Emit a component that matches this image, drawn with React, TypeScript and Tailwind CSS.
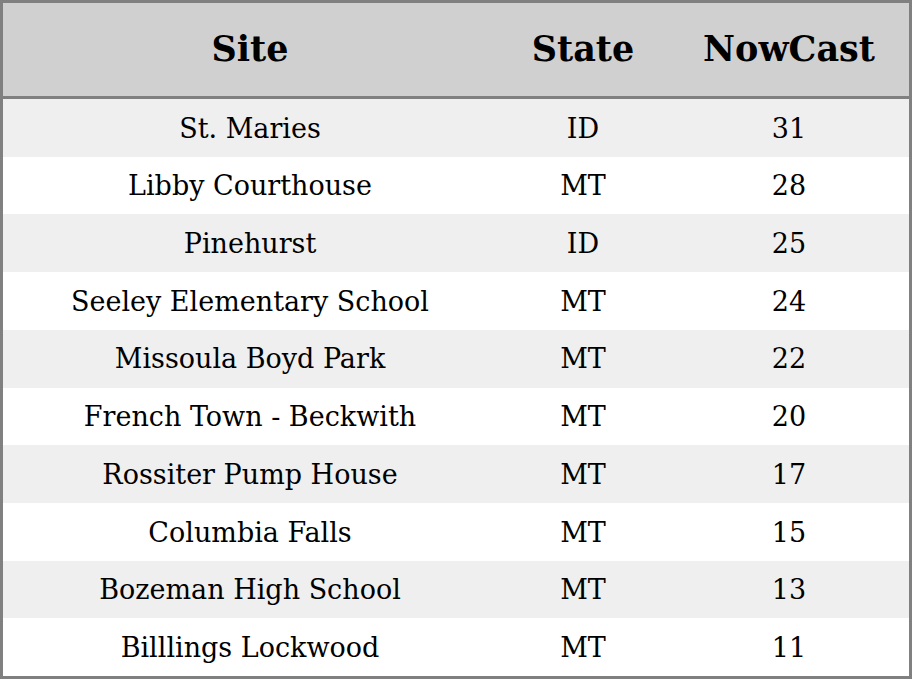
const rows: [string, string, number][] = [
  ["St. Maries", "ID", 31],
  ["Libby Courthouse", "MT", 28],
  ["Pinehurst", "ID", 25],
  ["Seeley Elementary School", "MT", 24],
  ["Missoula Boyd Park", "MT", 22],
  ["French Town - Beckwith", "MT", 20],
  ["Rossiter Pump House", "MT", 17],
  ["Columbia Falls", "MT", 15],
  ["Bozeman High School", "MT", 13],
  ["Billlings Lockwood", "MT", 11],
]

export default function App() {
  return (
    <div className="w-[912px] h-[679px] bg-white font-['DejaVu_Serif',serif] text-black">
      <div className="border-[3px] border-[#808080] h-full flex flex-col">
        <div className="grid grid-cols-[494px_172px_1fr] h-[96px] shrink-0 bg-[#d0d0d0] border-b-[3px] border-[#808080] text-[35px] font-bold items-center text-center">
          <div>Site</div>
          <div>State</div>
          <div>NowCast</div>
        </div>
        <div className="flex flex-col flex-1">
          {rows.map(([site, state, val], i) => (
            <div
              key={site}
              className={`grid grid-cols-[494px_172px_1fr] flex-1 items-center text-center text-[27px] pt-[2px] ${i % 2 === 0 ? "bg-[#efefef]" : "bg-white"}`}
            >
              <div>{site}</div>
              <div>{state}</div>
              <div>{val}</div>
            </div>
          ))}
        </div>
      </div>
    </div>
  )
}
